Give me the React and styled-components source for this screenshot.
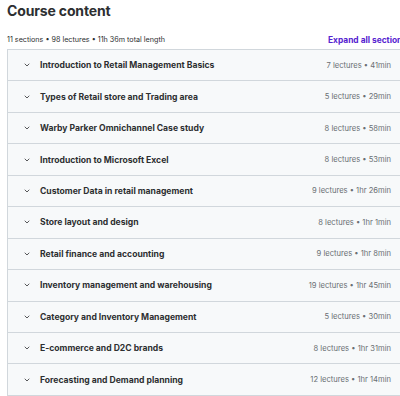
import React from 'react'
import styled, { createGlobalStyle } from 'styled-components'

const GlobalStyle = createGlobalStyle`
    html, body {
        margin: 0;
        padding: 0;
        background: #ffffff;
        overflow: hidden;
    }
    body {
        font-family: Inter, "Noto Sans", sans-serif;
        color: #2d2f31;
    }
`

const Page = styled.div`
    width: 400px;
    height: 396px;
    overflow: hidden;
    padding: 0 0 0 7px;
    box-sizing: border-box;
`

const Heading = styled.h2`
    margin: 0;
    height: 30px;
    font-size: 14px;
    font-weight: 700;
    letter-spacing: -0.15px;
    line-height: 21px;
`

const Summary = styled.div`
    width: 400px;
    display: flex;
    justify-content: space-between;
    align-items: center;
    height: 19px;
`

const Stats = styled.span`
    font-size: 7.2px;
    color: #2d2f31;
`

const ExpandLink = styled.span`
    font-size: 8.4px;
    font-weight: 700;
    color: #5624d0;
    white-space: nowrap;
`

const Panel = styled.div`
    width: 400px;
    border: 1px solid #d1d7dc;
    border-bottom: none;
`

const Row = styled.div`
    display: flex;
    align-items: center;
    height: 30.45px;
    background: #f7f9fa;
    border-bottom: 1px solid #d1d7dc;
    padding: 0 17px 0 15px;
`

const Chevron = styled.svg`
    width: 8px;
    height: 8px;
    flex: none;
    margin-right: 9px;
`

const Title = styled.span`
    flex: 1;
    font-size: 8.6px;
    font-weight: 700;
    color: #2d2f31;
    white-space: nowrap;
`

const Meta = styled.span`
    font-size: 7.6px;
    color: #6a6f73;
    white-space: nowrap;
`

const sections = [
    ['Introduction to Retail Management Basics', '7 lectures • 41min'],
    ['Types of Retail store and Trading area', '5 lectures • 29min'],
    ['Warby Parker Omnichannel Case study', '8 lectures • 58min'],
    ['Introduction to Microsoft Excel', '8 lectures • 53min'],
    ['Customer Data in retail management', '9 lectures • 1hr 26min'],
    ['Store layout and design', '8 lectures • 1hr 1min'],
    ['Retail finance and accounting', '9 lectures • 1hr 8min'],
    ['Inventory management and warehousing', '19 lectures • 1hr 45min'],
    ['Category and Inventory Management', '5 lectures • 30min'],
    ['E-commerce and D2C brands', '8 lectures • 1hr 31min'],
    ['Forecasting and Demand planning', '12 lectures • 1hr 14min'],
]

const App = () => (
    <Page>
        <GlobalStyle />
        <Heading>Course content</Heading>
        <Summary>
            <Stats>11 sections • 98 lectures • 11h 36m total length</Stats>
            <ExpandLink>Expand all sections</ExpandLink>
        </Summary>
        <Panel>
            {sections.map(([title, meta]) => (
                <Row key={title}>
                    <Chevron viewBox="0 0 8 8">
                        <path d="M2 3 L4 5 L6 3" fill="none" stroke="#2d2f31" strokeWidth="0.8" strokeLinecap="round" strokeLinejoin="round" />
                    </Chevron>
                    <Title>{title}</Title>
                    <Meta>{meta}</Meta>
                </Row>
            ))}
        </Panel>
    </Page>
)

export default App
